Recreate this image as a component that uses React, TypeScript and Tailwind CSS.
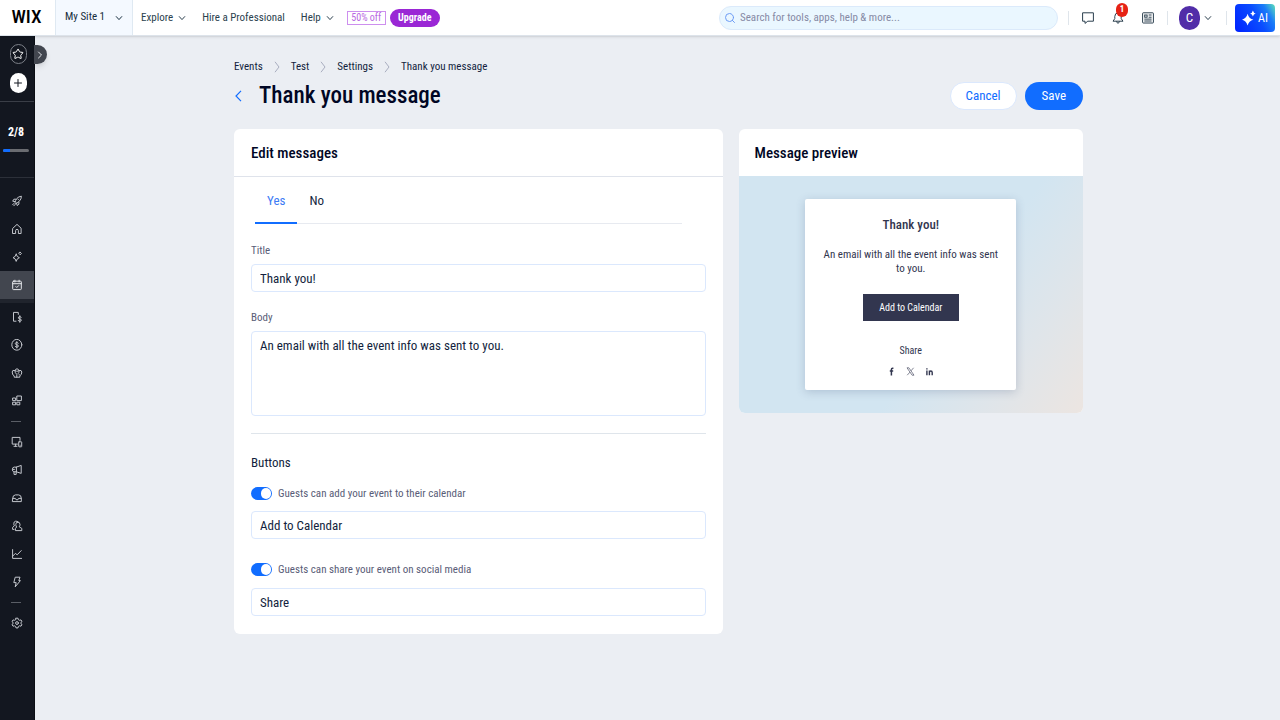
import { useState } from "react";
import type { ReactNode } from "react";
import { ChevronRight, Plus, Search, Star } from "lucide-react";

function Glyph({ children, size = "size-3" }: { children: ReactNode; size?: string }) {
  return (
    <svg
      viewBox="0 0 12 12"
      className={size}
      fill="none"
      stroke="currentColor"
      strokeWidth="1"
      strokeLinecap="round"
      strokeLinejoin="round"
      aria-hidden="true"
    >
      {children}
    </svg>
  );
}

function Caret() {
  return (
    <svg viewBox="0 0 8 8" className="size-2 shrink-0" fill="none" stroke="currentColor" strokeWidth="1" aria-hidden="true">
      <path d="M1 2.3L4 5.6L7 2.3" />
    </svg>
  );
}

type NavItem = { label: string; icon: ReactNode; active?: boolean };

const mainNav: NavItem[] = [
  {
    label: "Setup",
    icon: (
      <Glyph>
        <path d="M4 7.5C4.6 4.4 6.6 1.6 10.4 1.2C10.4 5 7.8 7.2 5 8.4Z" />
        <path d="M4.9 4.2H2.9L1.7 6.2L4 6.6M7.9 7.2V9.2L6.2 10.6L5.6 8.2" />
        <path d="M3 8.4L1.6 9.8M4.2 9.4L2.8 10.8M7.2 4.6L7.6 4.2" />
      </Glyph>
    ),
  },
  {
    label: "Home",
    icon: (
      <Glyph>
        <path d="M1.9 5.2L6 1.4L10.1 5.2V10.5H7.4V7.6Q7.4 6.4 6 6.4Q4.6 6.4 4.6 7.6V10.5H1.9Z" />
      </Glyph>
    ),
  },
  {
    label: "AI tools",
    icon: (
      <Glyph>
        <path d="M5.2 3.2Q5.7 6.1 8.4 6.7Q5.7 7.3 5.2 10.4Q4.7 7.3 2 6.7Q4.7 6.1 5.2 3.2Z" />
        <path d="M9.2 1.2L10.4 2.5L9.2 3.8L8 2.5Z" />
      </Glyph>
    ),
  },
  {
    label: "Events",
    active: true,
    icon: (
      <Glyph>
        <rect x="1.7" y="2.2" width="8.6" height="8.4" rx="0.8" />
        <path d="M1.7 4.7H10.3M3.9 1.2V3M8.1 1.2V3M4.9 7.6L5.8 8.5L7.7 6.6" />
      </Glyph>
    ),
  },
];

const businessNav: NavItem[] = [
  {
    label: "Sales",
    icon: (
      <Glyph>
        <path d="M5 10.2H2.5V1.4H7.3V3.4" />
        <path d="M10.2 6.4Q10 5.6 8.8 5.6Q7.4 5.6 7.4 6.8Q7.4 7.8 8.8 7.9Q10.3 8.1 10.3 9.2Q10.3 10.3 8.8 10.3Q7.4 10.3 7.2 9.4M8.8 4.7V11.3" />
      </Glyph>
    ),
  },
  {
    label: "Payments",
    icon: (
      <Glyph>
        <ellipse cx="5.8" cy="5.8" rx="5" ry="5.4" />
        <path d="M7.3 4.2Q7 3.5 5.8 3.5Q4.3 3.5 4.3 4.6Q4.3 5.6 5.8 5.8Q7.4 6 7.4 7Q7.4 8.2 5.8 8.2Q4.5 8.2 4.2 7.3M5.8 2.6V9" />
      </Glyph>
    ),
  },
  {
    label: "Finances",
    icon: (
      <Glyph>
        <path d="M4 3.6Q1 2.4 1.2 5Q1.4 8.6 3.2 8.8V10.2H8.8V8.8Q10.8 8 10.8 5Q10.8 2.6 8 3.6" />
        <path d="M4 3.6Q4.4 1.8 6 1.8Q7.6 1.8 8 3.6M4 3.6Q3.8 6 5.8 7.4V10.2M8 3.6Q8.4 5.6 7.2 6.6M5.6 4.2H6.6M8.2 7.6V8" />
      </Glyph>
    ),
  },
  {
    label: "Apps",
    icon: (
      <Glyph>
        <rect x="6.2" y="1" width="4.2" height="4.6" />
        <rect x="2" y="3" width="2.6" height="2.6" />
        <rect x="2" y="7.2" width="2.6" height="2.6" />
        <rect x="6.2" y="7.2" width="2.6" height="2.6" />
      </Glyph>
    ),
  },
];

const growthNav: NavItem[] = [
  {
    label: "Site and mobile",
    icon: (
      <Glyph>
        <path d="M6.4 8.1H1.2V1.4H9V4.4M3 10.3H6M4.6 8.2V10.2" />
        <rect x="7.7" y="5.8" width="3" height="5" rx="0.4" />
        <path d="M9.2 9.2V9.3" />
      </Glyph>
    ),
  },
  {
    label: "Marketing",
    icon: (
      <Glyph>
        <path d="M5.4 3.1L10.2 1.4V9.4L5.4 7.8H2.8Q1.4 7.6 1.4 5.4Q1.4 3.2 2.8 3.1ZM5.4 3.1V7.8M3 7.8V10.4H5.2V7.8M1.6 5.4H3.4" />
      </Glyph>
    ),
  },
  {
    label: "Inbox",
    icon: (
      <Glyph>
        <path d="M1.7 6.4Q1.7 2.9 4.4 2.9H7.6Q10.3 2.9 10.3 6.4V9.6H1.7ZM1.7 6.4H4.4Q4.6 7.9 6 7.9Q7.4 7.9 7.6 6.4H10.3" />
      </Glyph>
    ),
  },
  {
    label: "Customers",
    icon: (
      <Glyph>
        <path d="M6.8 2Q9 2 9 4.4Q9 6 8.2 6.8L10.8 8.4V10.6H4.4V8.6L5.6 7Q4.8 6 4.8 4.4Q4.8 2 6.8 2Z" />
        <path d="M7 1.9Q6 1 4.6 1.2Q2.6 1.6 2.8 3.8Q2.8 5 3.4 5.8L1.6 7.4V9.4H3" />
      </Glyph>
    ),
  },
  {
    label: "Analytics",
    icon: (
      <Glyph>
        <path d="M1.6 1.6V10.4H10.6M1.8 8L4.4 5.4L6.2 6.8L10.2 2.6" />
      </Glyph>
    ),
  },
  {
    label: "Automations",
    icon: (
      <Glyph>
        <path d="M4.6 1.2H9L7.8 4.6H9.4L4.2 10.9L5.2 6.6H3.2Z" />
      </Glyph>
    ),
  },
];

const settingsNav: NavItem[] = [
  {
    label: "Settings",
    icon: (
      <Glyph>
        <path d="M5 1.2H7L7.4 2.7L8.6 3.3L10 2.9L11 4.6L9.9 5.5V6.6L11 7.5L10 9.2L8.6 8.8L7.4 9.4L7 10.9H5L4.6 9.4L3.4 8.8L2 9.2L1 7.5L2.1 6.6V5.5L1 4.6L2 2.9L3.4 3.3L4.6 2.7Z" />
        <circle cx="6" cy="6.05" r="1.4" />
      </Glyph>
    ),
  },
];

function NavGroup({ items }: { items: NavItem[] }) {
  return (
    <ul className="w-full">
      {items.map((item) => (
        <li key={item.label}>
          <a
            href="#"
            aria-label={item.label}
            className={
              item.active
                ? "flex h-7 items-center justify-center bg-[#42464f] pr-px text-gray-200"
                : "flex h-7 items-center justify-center pr-px text-[#c3c6cc]"
            }
          >
            {item.icon}
          </a>
        </li>
      ))}
    </ul>
  );
}

function Sidebar() {
  return (
    <aside className="relative w-[35px] shrink-0 border-r border-[#0b0e14] bg-[#131720]">
      <button
        aria-label="Expand menu"
        className="absolute top-[9px] left-[34px] flex h-[19px] w-[13px] items-center justify-center rounded-r-full bg-[#42464f] pr-0.5 text-gray-200 shadow-md"
      >
        <ChevronRight className="size-3 shrink-0" strokeWidth={2} />
      </button>
      <nav aria-label="Main" className="flex flex-col items-center">
        <div className="flex h-[66px] w-full flex-col items-center gap-[9px] border-b border-[#3a3e47] pt-2 pl-0.5">
          <button
            aria-label="Favorites"
            className="flex h-5 w-[17px] items-center justify-center rounded-full border border-[#7c8088] text-white"
          >
            <Star className="size-3 shrink-0" strokeWidth={2} />
          </button>
          <button
            aria-label="Add"
            className="flex h-5 w-[17px] items-center justify-center rounded-full bg-white text-[#131720]"
          >
            <Plus className="size-3 shrink-0" strokeWidth={2} />
          </button>
        </div>
        <div className="flex h-[76px] w-full flex-col items-center gap-[9px] border-b border-[#2c3039] pt-[22px] pr-0.5">
          <span className="text-xs leading-4 font-bold text-white">2/8</span>
          <div className="flex h-[3px] w-[26px] overflow-hidden rounded-full bg-[#6a6c71]">
            <div className="w-1/4 bg-[#116dff]" />
          </div>
        </div>
        <div className="flex w-full flex-col items-center pt-[9px]">
          <NavGroup items={mainNav} />
          <div className="h-1 w-full bg-[#20242d]" />
          <NavGroup items={businessNav} />
          <div className="my-1.5 mr-0.5 h-px w-2.5 bg-[#5a5e66]" />
          <NavGroup items={growthNav} />
          <div className="my-1.5 mr-0.5 h-px w-2.5 bg-[#5a5e66]" />
          <NavGroup items={settingsNav} />
        </div>
      </nav>
    </aside>
  );
}

function HeaderDivider() {
  return <span className="h-3.5 w-px bg-[#dfe5eb]" />;
}

function Header() {
  return (
    <header className="relative z-10 flex h-9 shrink-0 items-center border-b border-[#dde3ea] bg-white text-[11px] text-[#2b3f4e] shadow-sm">
      <a href="#" aria-label="Wix" className="flex w-[55px] justify-center pr-0.5 text-[19px] font-medium text-black">
        WIX
      </a>
      <button className="flex h-full w-[78px] items-center justify-between border-x border-[#dfe9f2] bg-[#f4f9ff] pr-[9px] pl-[9px] text-[#162d3d]">
        My Site 1
        <Caret />
      </button>
      <nav aria-label="Site" className="flex items-center gap-4 pt-px pl-2">
        <button className="flex items-center gap-[5px]">
          Explore
          <Caret />
        </button>
        <a href="#">Hire a Professional</a>
        <button className="flex items-center gap-[5px]">
          Help
          <Caret />
        </button>
      </nav>
      <span className="ml-[13px] flex h-3.5 w-[39px] items-center justify-center border border-[#cd8fee] text-[10px] text-[#b868e2]">
        50% off
      </span>
      <button className="ml-1 h-[18px] w-[50px] rounded-full bg-[#9a27d5] text-[10px] font-bold text-white">
        Upgrade
      </button>
      <label className="mr-2.5 ml-auto flex h-6 w-[339px] items-center gap-1 rounded-full border border-[#dbeafb] bg-[#eaf7ff] px-1 text-[#6d9cf5]">
        <Search className="size-3 shrink-0" strokeWidth={2} />
        <input
          type="search"
          aria-label="Search"
          placeholder="Search for tools, apps, help & more..."
          className="min-w-0 flex-1 bg-transparent pt-px text-[#2b3f4e] outline-none placeholder:text-[#868aa5]"
        />
      </label>
      <div className="flex items-center">
        <HeaderDivider />
        <button aria-label="Messages" className="ml-[13px]">
          <svg viewBox="0 0 12 12" className="size-3" fill="none" stroke="currentColor" strokeWidth="1" strokeLinejoin="round">
            <path d="M0.6 0.8H11.4V9.2H5.8L3 11.4V9.2H0.6Z" />
          </svg>
        </button>
        <button aria-label="Notifications" className="relative ml-[18px]">
          <svg viewBox="0 0 12 12" className="size-3" fill="none" stroke="currentColor" strokeWidth="1" strokeLinejoin="round" strokeLinecap="round">
            <path d="M6 0.8Q2.8 1 2.8 4.4V6.6L1 9.2H11L9.2 6.6V4.4Q9.2 1 6 0.8ZM4.6 9.6Q4.8 11.2 6 11.2Q7.2 11.2 7.4 9.6" />
          </svg>
          <span className="absolute -top-[9px] left-1 flex h-3.5 w-3 items-center justify-center rounded-full bg-[#e62214] text-[9px] font-bold text-white">
            1
          </span>
        </button>
        <button aria-label="News" className="ml-[18px]">
          <svg viewBox="0 0 12 12" className="size-3" fill="none" stroke="currentColor" strokeWidth="1">
            <rect x="0.6" y="0.8" width="10.8" height="10.2" rx="0.6" />
            <rect x="2.7" y="3" width="2.4" height="2.2" />
            <path d="M6.6 3H9.6M6.6 5.2H9.6M2.3 7.1H9.6M2.3 9H9.6" />
          </svg>
        </button>
        <span className="ml-[13px] flex">
          <HeaderDivider />
        </span>
        <button aria-label="Account" className="ml-[11px] flex items-center gap-1">
          <span className="flex h-6 w-[21px] items-center justify-center rounded-full bg-[#512da8] text-[13px] text-white">
            C
          </span>
          <Caret />
        </button>
        <span className="ml-3.5 flex">
          <HeaderDivider />
        </span>
        <button className="mr-[5px] ml-2 flex h-7 w-10 items-center justify-center gap-0.5 rounded-sm bg-[linear-gradient(60deg,#0021ff_0%,#0a4dff_55%,#1b7cf8_78%,#5fe3b8_100%)] text-xs text-white">
          <svg viewBox="0 0 14 16" className="h-4 w-3.5" fill="currentColor" aria-hidden="true">
            <path d="M5.6 3.8Q6.8 8.7 11.4 9.7Q6.8 10.7 5.6 15.6Q4.4 10.7 -0.2 9.7Q4.4 8.7 5.6 3.8Z" />
            <path d="M10.9 0.4Q11.5 3 13.7 3.5Q11.5 4 10.9 6.6Q10.3 4 8.1 3.5Q10.3 3 10.9 0.4Z" />
          </svg>
          AI
        </button>
      </div>
    </header>
  );
}

function Switch({ label }: { label: string }) {
  const [on, setOn] = useState(true);
  return (
    <label className="flex items-center gap-1.5 text-[11px] leading-[17px] text-[#595d77]">
      <input type="checkbox" role="switch" checked={on} onChange={() => setOn(!on)} className="peer sr-only" />
      <span className="flex h-[13px] w-[21px] items-center rounded-full bg-[#a8caff] p-px peer-checked:justify-end peer-checked:bg-[#116dff]">
        <span className="h-[11px] w-2.5 rounded-full bg-white" />
      </span>
      {label}
    </label>
  );
}

const fieldStyle =
  "block w-full rounded-sm border border-[#dbe8fd] bg-white px-2 text-[13px] text-[#131f3e] outline-none focus:border-[#116dff]";

function Breadcrumbs() {
  const crumbs = ["Events", "Test", "Settings"];
  return (
    <nav aria-label="Breadcrumb">
      <ol className="flex items-center gap-2 text-[11px] leading-4 text-[#131f3e]">
        {crumbs.map((crumb) => (
          <li key={crumb} className="flex items-center gap-2">
            <a href="#">{crumb}</a>
            <svg viewBox="0 0 12 12" className="size-3" fill="none" stroke="#a9adbf" strokeWidth="1" aria-hidden="true">
              <path d="M4 0.8L8 6L4 11.2" />
            </svg>
          </li>
        ))}
        <li>Thank you message</li>
      </ol>
    </nav>
  );
}

function EditCard() {
  const [tab, setTab] = useState("Yes");
  return (
    <section className="col-span-7 rounded-md bg-white">
      <h2 className="border-b border-[#dfe3eb] px-[17px] pt-3.5 pb-3 text-[15px] leading-[21px] font-medium text-[#000624]">
        Edit messages
      </h2>
      <div className="px-[17px] pb-[18px]">
        <div role="tablist" className="mr-6 ml-1 flex border-b border-[#e7eaf0]">
          {["Yes", "No"].map((name) => (
            <button
              key={name}
              role="tab"
              aria-selected={tab === name}
              onClick={() => setTab(name)}
              className="-mb-px flex h-[47px] items-start border-b-2 border-transparent px-3 pt-4 text-[13px] leading-4 text-[#131f3e] aria-selected:border-[#116dff] aria-selected:text-[#3d7cf5]"
            >
              {name}
            </button>
          ))}
        </div>
        <label htmlFor="title" className="block pt-[19px] pb-[5px] text-[11px] leading-4 text-[#595d77]">
          Title
        </label>
        <input id="title" defaultValue="Thank you!" className={`${fieldStyle} h-7`} />
        <label htmlFor="body" className="block pt-[18px] pb-[5px] text-[11px] leading-4 text-[#595d77]">
          Body
        </label>
        <textarea
          id="body"
          defaultValue="An email with all the event info was sent to you."
          className={`${fieldStyle} h-[85px] resize-none py-1.5 leading-4`}
        />
        <hr className="mt-[17px] mb-[21px] border-[#dfe5eb]" />
        <h3 className="text-[13px] leading-4 text-[#131f3e]">Buttons</h3>
        <div className="mt-3.5 flex flex-col gap-[9px]">
          <Switch label="Guests can add your event to their calendar" />
          <input aria-label="Calendar button text" defaultValue="Add to Calendar" className={`${fieldStyle} h-7`} />
        </div>
        <div className="mt-[22px] flex flex-col gap-2.5">
          <Switch label="Guests can share your event on social media" />
          <input aria-label="Share text" defaultValue="Share" className={`${fieldStyle} h-7`} />
        </div>
      </div>
    </section>
  );
}

function PreviewCard() {
  return (
    <section className="col-span-5 overflow-hidden rounded-md bg-white">
      <h2 className="px-4 pt-3.5 pb-3 text-[15px] leading-[21px] font-medium text-[#000624]">Message preview</h2>
      <div className="flex justify-center bg-[linear-gradient(125deg,#d2e5f1_0%,#d2e5f1_60%,#dfe5ea_80%,#ece5e1_100%)] py-[23px]">
        <div className="flex w-[211px] flex-col items-center rounded-xs bg-white px-4 pt-[18px] pb-3.5 text-center text-[#32364f] shadow-[0_2px_10px_rgba(50,70,110,0.22)]">
          <h3 className="text-[13px] leading-4 font-medium">Thank you!</h3>
          <p className="mt-[15px] text-[11px] leading-3.5">An email with all the event info was sent to you.</p>
          <button className="mt-[18px] h-[27px] w-24 bg-[#32364f] text-[10px] text-white">
            Add to Calendar
          </button>
          <p className="mt-6 text-[10px] leading-3">Share</p>
          <div className="mt-2.5 flex items-center gap-2.5">
            <a href="#" aria-label="Facebook">
              <svg viewBox="0 0 9 9" className="size-[9px]" fill="none" stroke="currentColor" strokeWidth="1.5">
                <path d="M6.4 1.2H5.6Q4.4 1.2 4.4 2.6V8.6M2.8 4.1H6.2" />
              </svg>
            </a>
            <a href="#" aria-label="X">
              <svg viewBox="0 0 9 9" className="size-[9px]" fill="none" stroke="currentColor" strokeWidth="0.6">
                <path d="M1 0.8H2.9L8 8.2H6.1ZM7.6 0.8L5 3.8M4 5.1L1.2 8.2" />
              </svg>
            </a>
            <a href="#" aria-label="LinkedIn">
              <svg viewBox="0 0 9 9" className="size-[9px]" fill="none" stroke="currentColor" strokeWidth="1.4">
                <path d="M1.9 3.4V8.2M1.9 1.2V2.5M4.4 8.2V3.4M4.4 5.6Q4.4 4 5.8 4Q7.2 4 7.2 5.6V8.2" />
              </svg>
            </a>
          </div>
        </div>
      </div>
    </section>
  );
}

export default function App() {
  return (
    <div className="flex min-h-screen flex-col bg-[#ebeef3] font-['Roboto_Condensed',Roboto,sans-serif]">
      <Header />
      <div className="flex flex-1">
        <Sidebar />
        <main className="flex-1 pt-[23px] pr-6 pb-8 pl-[26px]">
          <div className="mx-auto max-w-[849px]">
            <Breadcrumbs />
            <div className="mt-[7px] flex items-center">
              <a href="#" aria-label="Back" className="mr-4 text-[#116dff]">
                <svg viewBox="0 0 9 12" className="h-3 w-[9px]" fill="none" stroke="currentColor" strokeWidth="1.2">
                  <path d="M7 0.8L2 6L7 11.2" />
                </svg>
              </a>
              <h1 className="text-[23px] leading-7 font-medium text-[#000624]">Thank you message</h1>
              <button className="ml-auto h-7 rounded-full border border-[#dbe8fd] bg-white px-[15px] text-[13px] text-[#116dff]">
                Cancel
              </button>
              <button className="ml-2 h-7 rounded-full bg-[#116dff] px-[17px] text-[13px] text-white">Save</button>
            </div>
            <div className="mt-[19px] grid grid-cols-12 items-start gap-4">
              <EditCard />
              <PreviewCard />
            </div>
          </div>
        </main>
      </div>
    </div>
  );
}
